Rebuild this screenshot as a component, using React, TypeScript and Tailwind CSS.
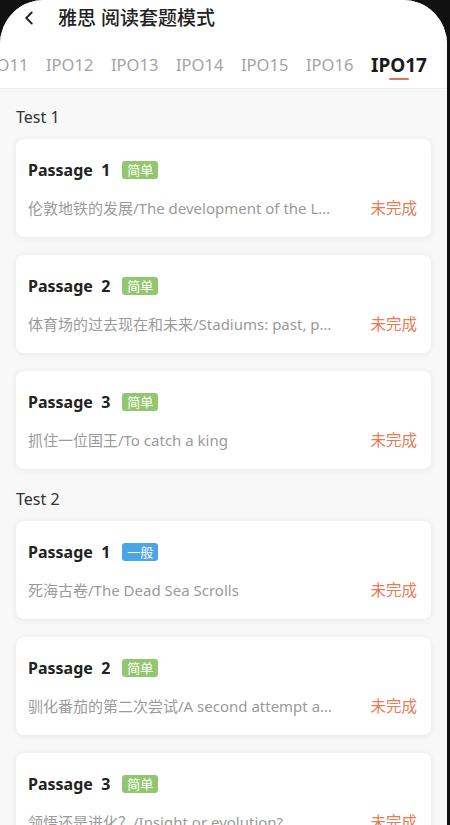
import { ChevronLeft } from 'lucide-react'

interface Passage {
  no: number
  level: 'easy' | 'normal'
  title: string
}

interface TestGroup {
  name: string
  passages: Passage[]
}

const tabs = ['IPO11', 'IPO12', 'IPO13', 'IPO14', 'IPO15', 'IPO16', 'IPO17']
const activeTab = 'IPO17'

const groups: TestGroup[] = [
  {
    name: 'Test 1',
    passages: [
      { no: 1, level: 'easy', title: '伦敦地铁的发展/The development of the London Underground railway' },
      { no: 2, level: 'easy', title: '体育场的过去现在和未来/Stadiums: past, present and future' },
      { no: 3, level: 'easy', title: '抓住一位国王/To catch a king' },
    ],
  },
  {
    name: 'Test 2',
    passages: [
      { no: 1, level: 'normal', title: '死海古卷/The Dead Sea Scrolls' },
      { no: 2, level: 'easy', title: '驯化番茄的第二次尝试/A second attempt at domesticating the tomato' },
      { no: 3, level: 'easy', title: '领悟还是进化？/Insight or evolution?' },
    ],
  },
]

const font = { fontFamily: '"Noto Sans", "Noto Sans CJK SC", sans-serif' }

function LevelBadge({ level }: { level: Passage['level'] }) {
  return (
    <span
      className={
        level === 'easy'
          ? 'ml-3 rounded-[3px] bg-[#93c76f] px-[5px] text-[13px] leading-[18px] text-white'
          : 'ml-3 rounded-[3px] bg-[#4ba4e6] px-[5px] text-[13px] leading-[18px] text-white'
      }
    >
      {level === 'easy' ? '简单' : '一般'}
    </span>
  )
}

function PassageCard({ passage }: { passage: Passage }) {
  return (
    <div className="h-[98px] rounded-lg bg-white px-[12px] pt-[20px] shadow-[0_1px_6px_rgba(0,0,0,0.08)]">
      <div className="flex items-center">
        <span className="text-[16px] font-bold leading-[22px] text-[#222]">
          Passage&nbsp;&nbsp;{passage.no}
        </span>
        <LevelBadge level={passage.level} />
      </div>
      <div className="mt-[17px] flex items-center">
        <span className="mr-[38px] min-w-0 flex-1 truncate text-[15px] leading-[20px] text-[#9a9a9a]">
          {passage.title}
        </span>
        <span className="flex-shrink-0 pr-[2px] text-[15.5px] leading-[20px] text-[#e67c57]">未完成</span>
      </div>
    </div>
  )
}

export default function App() {
  return (
    <div className="h-[825px] w-[450px] overflow-hidden bg-[#111]" style={font}>
      <div className="h-full w-[447px] overflow-hidden rounded-tl-[44px] rounded-tr-[44px] bg-[#f8f8f8]">
        {/* header */}
        <div className="bg-white">
          <div className="flex h-[36px] items-center pl-[18px]">
            <ChevronLeft className="h-[22px] w-[22px] text-[#222]" strokeWidth={2} />
            <span className="ml-[18px] text-[19px] font-medium text-[#222]">雅思 阅读套题模式</span>
          </div>

          {/* tabs */}
          <div className="flex h-[53px] items-start overflow-hidden border-b border-[#ececec]">
            <div className="ml-[-19px] mt-[17px] flex gap-[18px]">
              {tabs.map((t) => (
                <div key={t} className="flex flex-col items-center">
                  <span
                    className={
                      t === activeTab
                        ? 'text-[19px] font-bold leading-[24px] text-[#1a1a1a]'
                        : 'w-[47px] text-[16.5px] leading-[24px] text-[#a4a4a4]'
                    }
                  >
                    {t}
                  </span>
                  {t === activeTab && <div className="mt-[1px] h-[2px] w-[20px] rounded-full bg-[#e2735a]" />}
                </div>
              ))}
            </div>
          </div>
        </div>

        {/* test groups */}
        <div className="px-[16px]">
          {groups.map((g, i) => (
            <div key={g.name} className={i > 0 ? 'mt-[2px]' : ''}>
              <div className="pb-[11px] pt-[17px] text-[16px] leading-[22px] text-[#333]">{g.name}</div>
              <div className="flex flex-col gap-[18px]">
                {g.passages.map((p) => (
                  <PassageCard key={p.no} passage={p} />
                ))}
              </div>
            </div>
          ))}
        </div>
      </div>
    </div>
  )
}
